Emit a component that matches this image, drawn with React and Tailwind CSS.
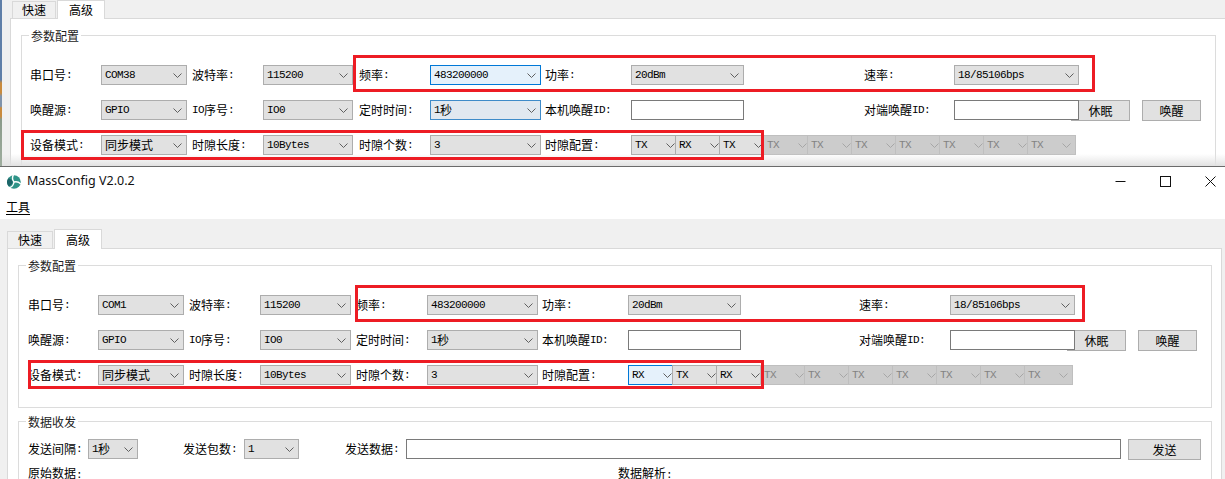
import React from "react";

const Txt = ({ children }) => {
  const parts = String(children).split(/([\x00-\x7f]+)/).filter(Boolean);
  return (
    <>
      {parts.map((p, i) =>
        /^[\x00-\x7f]+$/.test(p) ? (
          <span key={i} className="font-['Liberation_Mono',monospace] text-[11px] tracking-[-0.6px] font-normal">{p}</span>
        ) : (
          <span key={i}>{p}</span>
        )
      )}
    </>
  );
};

const Chevron = ({ dim }) => (
  <svg width="9" height="5" viewBox="0 0 9 5" className="shrink-0 ml-auto mr-[4px]">
    <path d="M0.5 0.5L4.5 4.5L8.5 0.5" fill="none" stroke={dim ? "#a6a6a6" : "#5f5f5f"} strokeWidth="1" />
  </svg>
);

const comboStyles = {
  normal: "bg-[#e1e1e1] border-[#adadad] text-black",
  focus: "bg-[#e5f1fb] border-[#0078d7] text-black",
  fading: "bg-[#e1e8f0] border-[#3f8bc9] text-black",
  disabled: "bg-[#cccccc] border-[#bfbfbf] text-[#838383]",
};

const Combo = ({ v, kind = "normal", className = "w-full" }) => (
  <div className={`flex items-center h-5 border pl-[3px] leading-none whitespace-nowrap ${comboStyles[kind]} ${className}`}>
    <Txt>{v}</Txt>
    <Chevron dim={kind === "disabled"} />
  </div>
);

const Label = ({ t, className = "" }) => (
  <div className={`flex items-center h-5 whitespace-nowrap text-black ${className}`}><Txt>{t}</Txt></div>
);

const Input = ({ className = "w-full" }) => (
  <input readOnly className={`block h-5 border border-[#7a7a7a] bg-white outline-none relative z-10 ${className}`} />
);

const Btn = ({ t, className = "" }) => (
  <div className={`flex items-center justify-center h-[21px] border border-[#adadad] bg-[#e1e1e1] text-black shrink-0 ${className}`}>
    <Txt>{t}</Txt>
  </div>
);

const Tab = ({ t, active, className = "" }) => (
  <div
    className={`flex items-center justify-center border border-b-0 border-[#d9d9d9] text-black ${
      active ? "bg-white relative z-10 -mb-px" : "bg-[#f0f0f0]"
    } ${className}`}
  >
    {t}
  </div>
);

const Slots = ({ first }) => {
  const kinds = ["normal", "normal", "normal", "disabled", "disabled", "disabled", "disabled", "disabled", "disabled", "disabled"];
  return (
    <div className="flex">
      {first.map((v, i) => (
        <Combo
          key={i}
          v={v}
          kind={i === 0 && v === "RX" ? "focus" : kinds[i]}
          className="w-[49px] -mr-[5px] shrink-0"
        />
      ))}
    </div>
  );
};

const ParamRows = ({ gridClass, l2, l3, l4, l5, port, freqKind, timeKind, slots }) => (
  <div className={`grid auto-rows-[20px] gap-y-[15px] ${gridClass}`}>
    <Label t="串口号:" />
    <Combo v={port} />
    <Label t="波特率:" className={l2} />
    <Combo v="115200" />
    <Label t="频率:" className={l3} />
    <Combo v="483200000" kind={freqKind} />
    <Label t="功率:" className={l4} />
    <Combo v="20dBm" />
    <Label t="速率:" className={l5} />
    <Combo v="18/85106bps" />
    <div />

    <Label t="唤醒源:" />
    <Combo v="GPIO" />
    <Label t="IO序号:" className={l2} />
    <Combo v="IO0" />
    <Label t="定时时间:" className={l3} />
    <Combo v="1秒" kind={timeKind} />
    <Label t="本机唤醒ID:" className={l4} />
    <Input />
    <Label t="对端唤醒ID:" className={l5} />
    <Input />
    <div className="flex gap-[12px] -ml-[8px]">
      <Btn t="休眠" className="w-[59px]" />
      <Btn t="唤醒" className="w-[59px]" />
    </div>

    <Label t="设备模式:" />
    <Combo v="同步模式" />
    <Label t="时隙长度:" className={l2} />
    <Combo v="10Bytes" />
    <Label t="时隙个数:" className={l3} />
    <Combo v="3" />
    <Label t="时隙配置:" className={l4} />
    <div className="col-span-4">
      <Slots first={slots} />
    </div>
  </div>
);

const GroupTitle = ({ t, className = "" }) => (
  <div className={`-mt-[8px] px-[2px] w-fit h-4 leading-4 bg-white text-[#222] ${className}`}>{t}</div>
);

const Logo = () => (
  <svg width="14" height="14" viewBox="0 0 14 14" className="shrink-0">
    <circle cx="7" cy="7" r="6.8" fill="#2f9488" />
    <path d="M1.2 3.2A6.8 6.8 0 0 0 1.8 11.4C3.8 10.4 5.6 8.4 5.8 6.4C5 5 3 3.8 1.2 3.2Z" fill="#1d6669" />
    <path d="M7 7C5.4 5 5 2.5 6.4 0" fill="none" stroke="#fff" strokeWidth="1.4" />
    <path d="M7 7C9.5 6.4 12 7 13.8 9" fill="none" stroke="#fff" strokeWidth="1.4" />
    <path d="M7 7C6.6 9.5 5 12 2.2 12.6" fill="none" stroke="#fff" strokeWidth="1.4" />
  </svg>
);

const RedBox = ({ className }) => (
  <div className={`absolute border-[3px] border-[#ed1c24] z-20 pointer-events-none ${className}`} />
);

export default function App() {
  const topSlots = ["TX", "RX", "TX", "TX", "TX", "TX", "TX", "TX", "TX", "TX"];
  const botSlots = ["RX", "TX", "RX", "TX", "TX", "TX", "TX", "TX", "TX", "TX"];
  return (
    <div className="relative w-[1225px] h-[479px] overflow-hidden bg-[#f0f0f0] text-[12px] font-['Noto_Sans_CJK_SC','Liberation_Sans',sans-serif]">
      {/* Upper capture */}
      <div className="relative h-[166px] overflow-hidden">
        <div className="absolute left-0 top-0 w-[2px] h-full bg-[linear-gradient(to_bottom,#5f7fa8_0%,#5f7fa8_48%,#c98a3c_50%,#c98a3c_56%,#7f93ab_58%,#7f93ab_64%,#c98a3c_65%,#c98a3c_70%,#8a9a8a_72%,#9fae9f_100%)]" />
        <div className="flex items-end h-[18px] pl-[12px] gap-[1px]">
          <Tab t="快速" className="w-[44px] h-[17px]" />
          <Tab t="高级" active className="w-[48px] h-[19px]" />
        </div>
        <div className="ml-[10px] h-[148px] border-t border-l border-[#d9d9d9] bg-white pl-[10px] pt-[16px]">
          <div className="w-[1195px] h-[200px] border border-[#dcdcdc] pl-[8px]">
            <GroupTitle t="参数配置" className="-ml-px" />
            <div className="mt-[21px]">
              <ParamRows
                gridClass="grid-cols-[71px_86px_76px_90px_77px_111px_90px_113px_210px_125px_auto]"
                l2="pl-[5px]"
                l3="pl-[6px]"
                l4="pl-[4px]"
                l5="pl-[120px]"
                port="COM38"
                freqKind="focus"
                timeKind="fading"
                slots={topSlots}
              />
            </div>
          </div>
        </div>
        <div className="absolute left-[2px] right-0 bottom-0 h-[12px] bg-[linear-gradient(to_bottom,rgba(236,236,236,0),rgba(226,226,226,1))] z-10" />
      </div>

      {/* Window */}
      <div className="border-t border-[#6b6b6b]">
        <div className="bg-white h-[52px]">
          <div className="flex items-center h-[29px] pl-[7px]">
            <Logo />
            <span className="ml-[6px] font-['Noto_Sans',sans-serif] text-[12.5px] text-[#111]">MassConfig V2.0.2</span>
            <div className="ml-auto flex items-center">
              <svg width="11" height="11" viewBox="0 0 11 11" className="mr-[34px]">
                <path d="M0.5 5.5H10.5" stroke="#111" strokeWidth="1" />
              </svg>
              <svg width="11" height="11" viewBox="0 0 11 11" className="mr-[34px]">
                <rect x="0.5" y="0.5" width="10" height="10" fill="none" stroke="#111" strokeWidth="1" />
              </svg>
              <svg width="11" height="11" viewBox="0 0 11 11" className="mr-[9px]">
                <path d="M0.5 0.5L10.5 10.5M10.5 0.5L0.5 10.5" stroke="#111" strokeWidth="1" />
              </svg>
            </div>
          </div>
          <div className="pl-[6px] h-[20px] leading-[22px] text-black"><span className="underline underline-offset-2">工具</span></div>
        </div>

        <div className="flex items-end h-[29px] pl-[7px] gap-[1px]">
          <Tab t="快速" className="w-[46px] h-[17px]" />
          <Tab t="高级" active className="w-[48px] h-[20px]" />
        </div>
        <div className="ml-[7px] w-[1215px] h-[240px] border border-[#d9d9d9] bg-white pl-[10px] pt-[16px]">
          <div className="w-[1194px] h-[143px] border border-[#dcdcdc] pl-[9px]">
            <GroupTitle t="参数配置" className="-ml-[2px]" />
            <div className="mt-[21px]">
              <ParamRows
                gridClass="grid-cols-[70px_86px_76px_91px_76px_111px_90px_113px_209px_125px_auto]"
                l2="pl-[5px]"
                l3="pl-[5px]"
                l4="pl-[4px]"
                l5="pl-[118px]"
                port="COM1"
                freqKind="normal"
                timeKind="normal"
                slots={botSlots}
              />
            </div>
          </div>

          <div className="mt-[13px] w-[1194px] h-[80px] border border-[#dcdcdc] pl-[9px]">
            <GroupTitle t="数据收发" className="-ml-[2px]" />
            <div className="flex items-start mt-[9px]">
              <Label t="发送间隔:" className="w-[60px]" />
              <Combo v="1秒" className="w-[50px]" />
              <Label t="发送包数:" className="ml-[45px] w-[61px]" />
              <Combo v="1" className="w-[55px]" />
              <Label t="发送数据:" className="ml-[46px] w-[61px]" />
              <Input className="w-[715px]" />
              <Btn t="发送" className="ml-[7px] w-[73px]" />
            </div>
            <div className="flex mt-[6px] h-[14px] leading-[14px] text-black whitespace-nowrap">
              <div className="w-[590px]"><Txt>原始数据:</Txt></div>
              <div><Txt>数据解析:</Txt></div>
            </div>
          </div>
        </div>
      </div>

      <RedBox className="left-[353px] top-[55px] w-[742px] h-[37px]" />
      <RedBox className="left-[21px] top-[130px] w-[743px] h-[30px]" />
      <RedBox className="left-[355px] top-[285px] w-[730px] h-[37px]" />
      <RedBox className="left-[28px] top-[360px] w-[736px] h-[29px]" />
    </div>
  );
}
